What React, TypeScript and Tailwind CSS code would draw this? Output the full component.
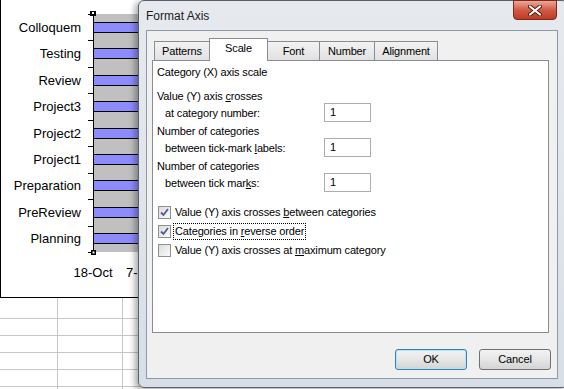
import React from 'react';

const categories = [
  'Colloquem',
  'Testing',
  'Review',
  'Project3',
  'Project2',
  'Project1',
  'Preparation',
  'PreReview',
  'Planning',
];

const PLOT_TOP = 14;
const PLOT_BOTTOM = 252;
const AXIS_X = 93;
const STEP = (PLOT_BOTTOM - PLOT_TOP) / categories.length;

const ChartBackdrop: React.FC = () => (
  <svg width={564} height={389} className="block" style={{ fontFamily: '"Liberation Sans", Arial, sans-serif' }}>
    {/* sheet grid under the chart */}
    {[318.5, 335.5, 352.5, 369.5, 386.5].map((y) => (
      <line key={y} x1={0} x2={564} y1={y} y2={y} stroke="#c6c6c6" />
    ))}
    {[57.5, 122.5].map((x) => (
      <line key={x} x1={x} x2={x} y1={298} y2={389} stroke="#c6c6c6" />
    ))}

    {/* chart area */}
    <rect x={0} y={0} width={300} height={297} fill="#ffffff" />
    <line x1={0.5} x2={0.5} y1={0} y2={298} stroke="#000" />
    <line x1={0} x2={300} y1={297.5} y2={297.5} stroke="#000" />

    {/* plot area */}
    <rect x={AXIS_X} y={PLOT_TOP} width={200} height={PLOT_BOTTOM - PLOT_TOP} fill="#c0c0c0" />
    {categories.map((name, i) => {
      const c = PLOT_TOP + STEP * (i + 0.5);
      return (
        <g key={name}>
          <rect x={AXIS_X + 0.5} y={Math.round(c - 5.5) + 0.5} width={200} height={10} fill="#8c8cff" stroke="#000" />
          <text x={81} y={c} fontSize={13} textAnchor="end" dominantBaseline="central" fill="#000">
            {name}
          </text>
        </g>
      );
    })}
    <line x1={AXIS_X + 0.5} x2={AXIS_X + 0.5} y1={PLOT_TOP} y2={PLOT_BOTTOM} stroke="#000" />
    {categories.concat(['']).map((_, i) => {
      const y = Math.round(PLOT_TOP + STEP * i) + 0.5;
      return <line key={i} x1={88} x2={AXIS_X} y1={y} y2={y} stroke="#000" />;
    })}

    {/* selection handles */}
    <rect x={90} y={11} width={6} height={5} fill="#000" />
    <rect x={92} y={12} width={2} height={2} fill="#fff" />
    <rect x={91} y={250} width={5} height={5} fill="#000" />
    <rect x={92.5} y={251.5} width={2} height={2} fill="#fff" />

    <text x={93} y={272} fontSize={13} textAnchor="middle" dominantBaseline="central" fill="#000">
      18-Oct
    </text>
    <text x={126} y={272} fontSize={13} dominantBaseline="central" fill="#000">
      7-Nov
    </text>
  </svg>
);

const CheckBox: React.FC<{ checked?: boolean }> = ({ checked }) => (
  <span className="w-[13px] h-[13px] border border-[#8f8f8f] bg-gradient-to-br from-[#dcdcdc] to-[#fbfbfb] flex items-center justify-center shrink-0">
    {checked && (
      <svg width={9} height={9} viewBox="0 0 9 9">
        <path d="M1 4.5 L3.5 7 L8 1" fill="none" stroke="#4a5f97" strokeWidth={1.8} />
      </svg>
    )}
  </span>
);

const NumberField: React.FC<{ value: string }> = ({ value }) => (
  <div className="w-[47px] h-[19px] border border-[#abadb3] bg-white pl-[5px] flex items-center text-[11px]">
    {value}
  </div>
);

const tabs = [
  { name: 'Patterns', w: 'w-[56px]' },
  { name: 'Scale', w: 'w-[59px]' },
  { name: 'Font', w: 'w-[53px]' },
  { name: 'Number', w: 'w-[56px]' },
  { name: 'Alignment', w: 'w-[64px]' },
];

const FormatAxisDialog: React.FC = () => (
  <div className="absolute left-[138px] top-0 w-[430px] h-[388px] rounded-[6px] border border-[#59626c] bg-gradient-to-b from-[#e6eaef] via-[#e0e5eb] to-[#d8dee6] shadow-[-3px_2px_6px_rgba(0,0,0,0.35)] flex flex-col">
    {/* title bar */}
    <div className="h-[29px] flex items-start justify-between">
      <span className="pl-[7px] pt-[6px] text-[12px] text-[#1b1b1b]">Format Axis</span>
      <div className="mr-[10px] -mt-px w-[44px] h-[20px] rounded-b-[4px] border border-[#7a2a1c] bg-gradient-to-b from-[#e9a898] via-[#d05a44] to-[#c03a22] flex items-center justify-center">
        <svg width={14} height={11} viewBox="0 0 14 11">
          <path d="M2 1.5 L12 9.5 M12 1.5 L2 9.5" stroke="#5a1a10" strokeWidth={4} strokeLinecap="round" />
          <path d="M2 1.5 L12 9.5 M12 1.5 L2 9.5" stroke="#ffffff" strokeWidth={2.2} strokeLinecap="round" />
        </svg>
      </div>
    </div>

    {/* client area */}
    <div className="ml-[7px] w-[412px] h-[349px] border border-[#8d99a6] bg-[#f0f0f0] flex flex-col pl-[5px] pt-[7px] tracking-[-0.15px]">
      <div className="flex items-end h-[22px] pl-[2px] relative z-10">
        {tabs.map((t, i) => {
          const active = t.name === 'Scale';
          return (
            <div
              key={t.name}
              className={
                active
                  ? `${t.w} h-[23px] -mb-px border border-b-0 border-[#898c95] bg-white flex items-center justify-center pb-[3px] ${i > 0 ? '-ml-px' : ''}`
                  : `${t.w} h-[19px] border border-b-0 border-[#898c95] bg-gradient-to-b from-[#f3f3f3] to-[#e1e1e1] flex items-center justify-center ${i > 0 ? '-ml-px' : ''}`
              }
            >
              {t.name}
            </div>
          );
        })}
      </div>

      <div className="w-[397px] h-[273px] border border-[#898c95] bg-white pl-[4px] pt-[3px] flex flex-col">
        <div className="leading-[16px]">Category (X) axis scale</div>

        <div className="mt-[8px] flex flex-col gap-[1px] leading-[17px]">
          <div className="flex items-end">
            <div className="w-[167px]">
              <div>
                Value (Y) axis <u>c</u>rosses
              </div>
              <div className="pl-[8px]">at category number:</div>
            </div>
            <NumberField value="1" />
          </div>
          <div className="flex items-end">
            <div className="w-[167px]">
              <div>Number of categories</div>
              <div className="pl-[8px]">
                between tick-mark <u>l</u>abels:
              </div>
            </div>
            <NumberField value="1" />
          </div>
          <div className="flex items-end">
            <div className="w-[167px]">
              <div>Number of categories</div>
              <div className="pl-[8px]">
                between tick mar<u>k</u>s:
              </div>
            </div>
            <NumberField value="1" />
          </div>
        </div>

        <div className="mt-[11px] flex flex-col pl-[1px]">
          <div className="h-[19px] flex items-center gap-[3px]">
            <CheckBox checked />
            <span className="px-[1px]">
              Value (Y) axis crosses <u>b</u>etween categories
            </span>
          </div>
          <div className="h-[19px] flex items-center gap-[3px]">
            <CheckBox checked />
            <span className="px-[1px] leading-[15px] outline outline-1 outline-dotted outline-[#000]">
              Categories in <u>r</u>everse order
            </span>
          </div>
          <div className="h-[19px] flex items-center gap-[3px]">
            <CheckBox />
            <span className="px-[1px]">
              Value (Y) axis crosses at <u>m</u>aximum category
            </span>
          </div>
        </div>
      </div>

      <div className="mt-[16px] flex justify-end gap-[12px] pr-[6px]">
        <button className="w-[72px] h-[21px] rounded-[3px] border border-[#3c7fb1] bg-gradient-to-b from-[#f2f2f2] via-[#e6e6e6] to-[#d4d4d4] shadow-[inset_0_0_0_1px_#b6e2f8] text-[11px]">
          OK
        </button>
        <button className="w-[72px] h-[21px] rounded-[3px] border border-[#707070] bg-gradient-to-b from-[#f2f2f2] via-[#e6e6e6] to-[#d4d4d4] text-[11px]">
          Cancel
        </button>
      </div>
    </div>
  </div>
);

const App: React.FC = () => (
  <div
    className="relative w-[564px] h-[389px] overflow-hidden bg-white text-[11px] text-black"
    style={{ fontFamily: '"Liberation Sans", Arial, sans-serif' }}
  >
    <ChartBackdrop />
    <FormatAxisDialog />
  </div>
);

export default App;
